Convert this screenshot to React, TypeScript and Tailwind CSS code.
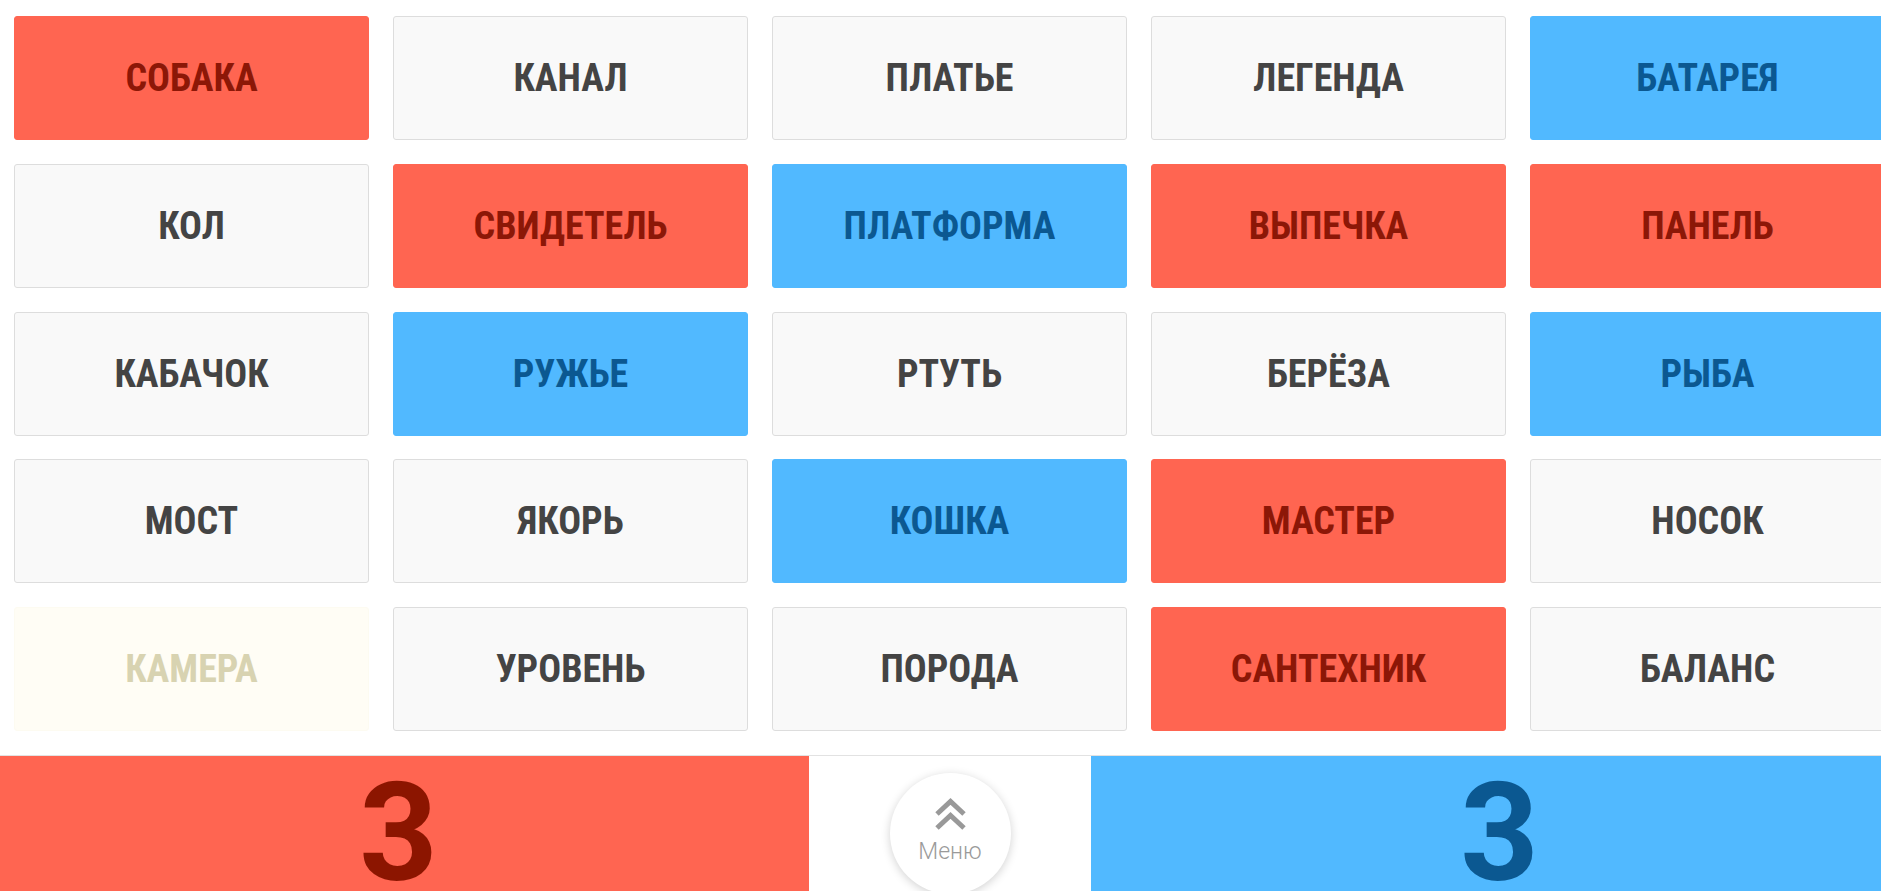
import React from "react";

type Kind = "red" | "blue" | "gray" | "pale";

const words: [string, Kind][] = [
  ["СОБАКА", "red"], ["КАНАЛ", "gray"], ["ПЛАТЬЕ", "gray"], ["ЛЕГЕНДА", "gray"], ["БАТАРЕЯ", "blue"],
  ["КОЛ", "gray"], ["СВИДЕТЕЛЬ", "red"], ["ПЛАТФОРМА", "blue"], ["ВЫПЕЧКА", "red"], ["ПАНЕЛЬ", "red"],
  ["КАБАЧОК", "gray"], ["РУЖЬЕ", "blue"], ["РТУТЬ", "gray"], ["БЕРЁЗА", "gray"], ["РЫБА", "blue"],
  ["МОСТ", "gray"], ["ЯКОРЬ", "gray"], ["КОШКА", "blue"], ["МАСТЕР", "red"], ["НОСОК", "gray"],
  ["КАМЕРА", "pale"], ["УРОВЕНЬ", "gray"], ["ПОРОДА", "gray"], ["САНТЕХНИК", "red"], ["БАЛАНС", "gray"],
];

const kindClass: Record<Kind, string> = {
  red: "bg-[#ff6551] border-[#ff6551] text-[#8c1707]",
  blue: "bg-[#51b9ff] border-[#51b9ff] text-[#0b5891]",
  gray: "bg-[#f9f9f9] border-[#dddddd] text-[#444444]",
  pale: "bg-[#fffdf5] border-[#fdfbf1] text-[#d8d3b1]",
};

export default function App() {
  return (
    <div className="w-screen h-[891px] overflow-hidden bg-white" style={{ fontFamily: "Roboto, 'Noto Sans', sans-serif" }}>
      <div className="w-[1900px] flex flex-col">
        <div className="grid grid-cols-[repeat(5,355px)] gap-x-[24px] gap-y-[23.75px] pl-[14px] pt-[16px]">
          {words.map(([w, k]) => (
            <div
              key={w}
              className={`h-[124px] rounded-[3px] border flex items-center justify-center ${kindClass[k]}`}
            >
              <span className="text-[38px] font-bold leading-none [font-stretch:condensed]">{w}</span>
            </div>
          ))}
        </div>
        <div className="mt-[24px] flex h-[140px] border-t border-[#e2e2e2]">
          <div className="w-[809px] bg-[#ff6551] flex justify-center pr-[12px]">
            <span className="text-[137px] font-bold leading-none pt-[9px] text-[#8c1500]">3</span>
          </div>
          <div className="w-[282px] bg-white flex justify-center pt-[17px]">
            <div className="w-[121px] h-[121px] rounded-full bg-white shadow-[0_2px_10px_rgba(0,0,0,0.18)] flex flex-col items-center pt-[25px]">
              <svg width="33" height="32" viewBox="0 0 33 32" fill="none" stroke="#999999" strokeWidth="5" strokeLinecap="butt">
                <polyline points="3,16 16.5,3.5 30,16" />
                <polyline points="3,30 16.5,17.5 30,30" />
              </svg>
              <span className="text-[23px] font-light text-[#9a9a9a] leading-none mt-[10px]">Меню</span>
            </div>
          </div>
          <div className="w-[809px] bg-[#51b9ff] flex justify-center pl-[8px]">
            <span className="text-[137px] font-bold leading-none pt-[9px] text-[#0b5891]">3</span>
          </div>
        </div>
      </div>
    </div>
  );
}
